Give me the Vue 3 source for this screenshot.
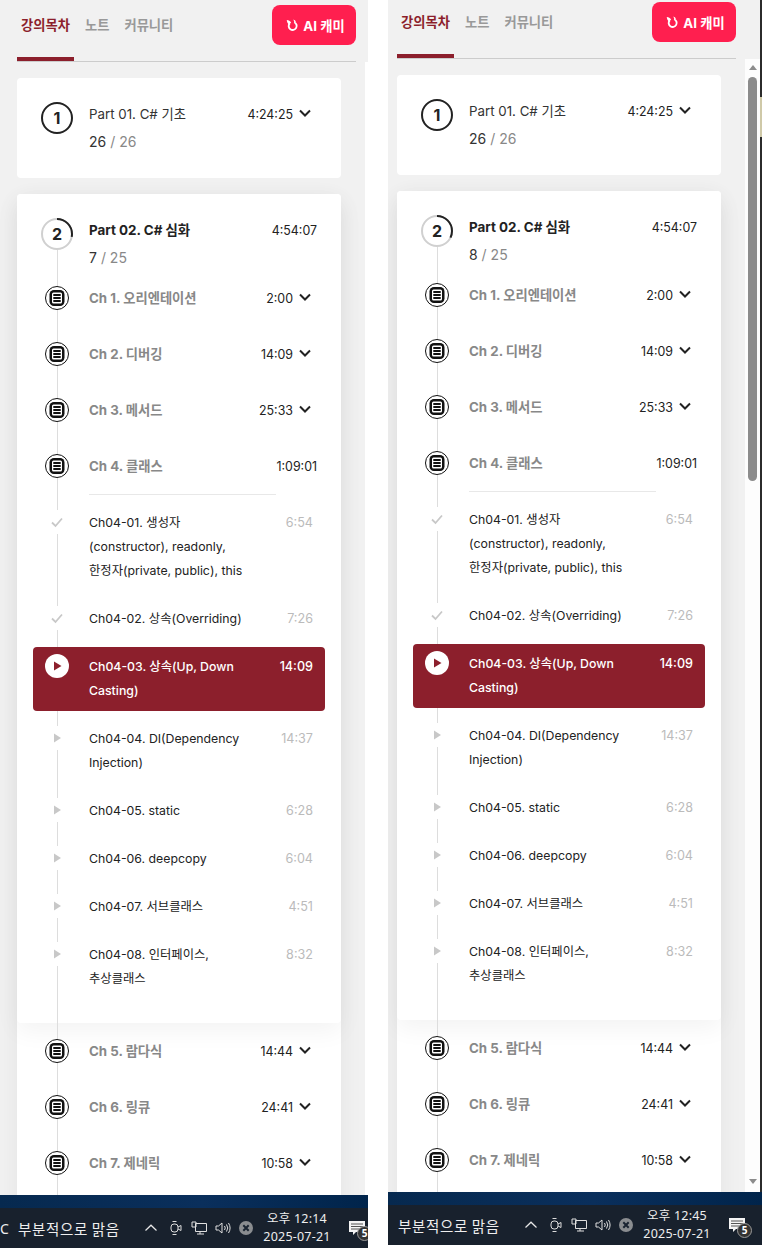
<script setup>
const topChapters = [
  { name: 'Ch 1. 오리엔테이션', time: '2:00', open: false },
  { name: 'Ch 2. 디버깅', time: '14:09', open: false },
  { name: 'Ch 3. 메서드', time: '25:33', open: false },
  { name: 'Ch 4. 클래스', time: '1:09:01', open: true },
]
const tailChapters = [
  { name: 'Ch 5. 람다식', time: '14:44' },
  { name: 'Ch 6. 링큐', time: '24:41' },
  { name: 'Ch 7. 제네릭', time: '10:58' },
]
const lectures = [
  { title: 'Ch04-01. 생성자 (constructor), readonly, 한정자(private, public), this', time: '6:54', state: 'done' },
  { title: 'Ch04-02. 상속(Overriding)', time: '7:26', state: 'done' },
  { title: 'Ch04-03. 상속(Up, Down Casting)', time: '14:09', state: 'now' },
  { title: 'Ch04-04. DI(Dependency Injection)', time: '14:37', state: 'todo' },
  { title: 'Ch04-05. static', time: '6:28', state: 'todo' },
  { title: 'Ch04-06. deepcopy', time: '6:04', state: 'todo' },
  { title: 'Ch04-07. 서브클래스', time: '4:51', state: 'todo' },
  { title: 'Ch04-08. 인터페이스, 추상클래스', time: '8:32', state: 'todo' },
]
const panels = [
  { id: 'left', done: 7, clock: '오후 12:14', weatherLead: 'C' },
  { id: 'right', done: 8, clock: '오후 12:45', weatherLead: '' },
]
const ringLength = 2 * Math.PI * 15
const ringDash = (done) => `${((done / 25) * ringLength).toFixed(1)} ${ringLength.toFixed(1)}`
</script>

<template>
  <div class="root">
    <section v-for="p in panels" :key="p.id" class="panel" :class="'panel-' + p.id">
      <div class="window">
        <div class="col">
          <header class="head">
            <nav class="tabs">
              <span class="tab active">강의목차</span>
              <span class="tab">노트</span>
              <span class="tab">커뮤니티</span>
            </nav>
            <button class="ai">
              <svg class="ai-icon" viewBox="0 0 14 14" width="13" height="13">
                <path d="M4 4.6a4.300 4.300 0 1 0 4.800-1.100" fill="none" stroke="#fff" stroke-width="2" />
                <path d="M.8 1c2 .2 3.700 1 4.700 2.700L3.300 6.200C1.800 4.800 1 3 .8 1zM7.800 .6c1.300.4 2.300 1 3 2L9 3.400C8.700 2.500 8.300 1.500 7.800 .6z" fill="#fff" />
              </svg>
              AI 캐미
            </button>
          </header>
          <div class="body">
            <div class="content">
              <article class="card part-one">
                <div class="ring full">1</div>
                <div class="part-text">
                  <div class="part-line">
                    <span class="part-title">Part 01. C# 기초</span>
                    <span class="time">4:24:25</span>
                    <svg class="chev" viewBox="0 0 24 12" width="24" height="12"><path d="M7 2.500 12 7.500l5-5" /></svg>
                  </div>
                  <div class="count">26 <i>/ 26</i></div>
                </div>
              </article>

              <article class="card part-two">
                <div class="open-box">
                  <span class="rail rail-top"></span>
                  <div class="part-head">
                    <div class="ring">
                      <svg class="ring-svg" viewBox="0 0 32 32" width="32" height="32">
                        <circle cx="16" cy="16" r="15" fill="#fff" stroke="#d0d0d0" stroke-width="2" />
                        <circle cx="16" cy="16" r="15" fill="none" stroke="#222" stroke-width="2" :stroke-dasharray="ringDash(p.done)" transform="rotate(-90 16 16)" />
                      </svg>
                      <span class="ring-num">2</span>
                    </div>
                    <div class="part-text">
                      <div class="part-line">
                        <span class="part-title strong">Part 02. C# 심화</span>
                        <span class="time">4:54:07</span>
                      </div>
                      <div class="count">{{ p.done }} <i>/ 25</i></div>
                    </div>
                  </div>

                  <div v-for="c in topChapters" :key="c.name" class="chapter">
                    <svg class="doc" viewBox="0 0 24 24" width="24" height="24">
                      <circle cx="12" cy="12" r="11.5" fill="#fff" stroke="#111" />
                      <rect x="4.500" y="4" width="15" height="16" rx="4.500" fill="#111" />
                      <rect x="7" y="6.500" width="10" height="11" rx="1.500" fill="#fff" />
                      <path d="M8.300 9h7.400M8.300 12h7.400M8.300 15h7.400" stroke="#111" stroke-width="1.800" />
                    </svg>
                    <span class="chapter-name">{{ c.name }}</span>
                    <span class="time">{{ c.time }}</span>
                    <svg v-if="!c.open" class="chev" viewBox="0 0 24 12" width="24" height="12"><path d="M7 2.500 12 7.500l5-5" /></svg>
                  </div>

                  <div class="divider"></div>

                  <div class="lectures">
                    <div v-for="l in lectures" :key="l.title" class="lecture" :class="{ now: l.state === 'now' }">
                      <span class="state" :class="'state-' + l.state">
                        <svg v-if="l.state === 'done'" viewBox="0 0 24 24" width="24" height="24"><path d="M7 12.500l3.500 3.500L17 8.500" fill="none" stroke="#c8c8c8" stroke-width="1.800" /></svg>
                        <svg v-else-if="l.state === 'todo'" viewBox="0 0 24 24" width="24" height="24"><path d="M9 7.500v9l7-4.500z" fill="#c8c8c8" /></svg>
                        <svg v-else viewBox="0 0 24 24" width="24" height="24"><circle cx="12" cy="12" r="12" fill="#fff" /><path d="M9 7.500v9l7.500-4.500z" fill="#8c1f2c" /></svg>
                      </span>
                      <span class="lecture-title">{{ l.title }}</span>
                      <span class="lecture-time">{{ l.time }}</span>
                    </div>
                  </div>
                </div>

                <div class="tail">
                  <span class="rail"></span>
                  <div v-for="c in tailChapters" :key="c.name" class="chapter">
                    <svg class="doc" viewBox="0 0 24 24" width="24" height="24">
                      <circle cx="12" cy="12" r="11.5" fill="#fff" stroke="#111" />
                      <rect x="4.500" y="4" width="15" height="16" rx="4.500" fill="#111" />
                      <rect x="7" y="6.500" width="10" height="11" rx="1.500" fill="#fff" />
                      <path d="M8.300 9h7.400M8.300 12h7.400M8.300 15h7.400" stroke="#111" stroke-width="1.800" />
                    </svg>
                    <span class="chapter-name">{{ c.name }}</span>
                    <span class="time">{{ c.time }}</span>
                    <svg class="chev" viewBox="0 0 24 12" width="24" height="12"><path d="M7 2.500 12 7.500l5-5" /></svg>
                  </div>
                </div>
              </article>
            </div>
            <div v-if="p.id === 'right'" class="scrollbar">
              <span class="arrow up"></span>
              <span class="thumb"></span>
              <span class="arrow down"></span>
            </div>
          </div>
        </div>
        <div v-if="p.id === 'right'" class="strip"></div>
      </div>

      <footer class="taskbar">
        <div class="task-blue"></div>
        <div class="task-dark">
          <span class="lead">{{ p.weatherLead }}</span>
          <span class="weather">부분적으로 맑음</span>
          <svg class="tray" viewBox="0 0 12 12" width="12" height="12"><path d="M.5 8.500 6 3.200l5.500 5.300" fill="none" stroke="#e8e8e8" stroke-width="1.200" /></svg>
          <svg class="tray tray-cam" viewBox="0 0 12 16" width="12" height="16">
            <rect x="1" y="4" width="7" height="8" rx="3" fill="none" stroke="#ddd" />
            <path d="M8 7l3-1.500v5L8 9M2.500 1.500h4M2.500 14.500h4" fill="none" stroke="#ddd" />
          </svg>
          <svg class="tray tray-net" viewBox="0 0 16 14" width="16" height="14">
            <path d="M4.500 2.500h11v8h-11zM1 1h4v5H1zM9 10.500v2.500M6 13h7" fill="#1a2431" stroke="#e0e0e0" />
          </svg>
          <svg class="tray tray-vol" viewBox="0 0 16 14" width="16" height="14">
            <path d="M1 5h2.500L7 2v10L3.500 9H1zM9.500 5q1.500 2 0 4M11.500 3.500q2.500 3.500 0 7M13.500 2q3.200 5 0 10" fill="none" stroke="#e0e0e0" />
          </svg>
          <svg class="tray tray-x" viewBox="0 0 14 14" width="14" height="14">
            <circle cx="7" cy="7" r="7" fill="#8a8d90" />
            <path d="M4.300 4.300l5.400 5.400M9.700 4.300l-5.400 5.400" stroke="#1a2431" stroke-width="2" />
          </svg>
          <div class="clock">
            <span>{{ p.clock }}</span>
            <span>2025-07-21</span>
          </div>
          <div class="notify">
            <svg viewBox="0 0 16 15" width="16" height="15">
              <path d="M0 0h16v11H7l-3 3v-3H0z" fill="#f4f4f4" />
              <path d="M2 3h12M2 5.500h12M2 8h8" stroke="#555" />
            </svg>
            <span class="badge">5</span>
          </div>
        </div>
      </footer>
    </section>
  </div>
</template>

<style>
html, body { margin: 0; background: #fff; }
</style>

<style scoped>
.root {
  display: flex;
  width: 772px;
  height: 1248px;
  overflow: hidden;
  background: #fff;
  font-family: Inter, "Noto Sans CJK KR", "Noto Sans", sans-serif;
  color: #222;
}
.panel { display: flex; flex-direction: column; overflow: hidden; }
.panel-left { width: 368px; height: 1248px; --inset: 17px; --lead: 18px; }
.panel-right { width: 374px; height: 1245px; margin-left: 20px; --inset: 9px; --lead: 10px; }
.window { flex: 1; min-height: 0; display: flex; overflow: hidden; }
.col { flex: 1; min-width: 0; display: flex; flex-direction: column; }
.strip {
  width: 2px;
  background: linear-gradient(#2b2b2b 0 97px, #cfc9a8 97px 137px, #2b2b2b 137px);
}

.head {
  display: flex;
  justify-content: space-between;
  align-items: flex-start;
  background: #f1f1f1;
  padding-left: var(--inset);
  flex: none;
  position: relative;
}
.panel-left .head { padding-top: 5px; padding-right: 12px; }
.panel-right .head { padding-top: 2px; padding-right: 24px; }
.head::after {
  content: "";
  position: absolute;
  left: var(--inset);
  bottom: 0;
  height: 1px;
  background: #ccc;
}
.panel-left .head::after { right: 12px; }
.panel-right .head::after { right: 24px; }
.tabs { display: flex; gap: 7px; padding-bottom: 1px; }
.tab {
  padding: 8px 4px 20px;
  line-height: 24px;
  border-bottom: 4px solid transparent;
  font-size: 13.3px;
  font-weight: 700;
  color: #999;
}
.tab.active { color: #8c1f2c; border-bottom-color: #8c1f2c; }
.ai {
  display: flex;
  align-items: center;
  justify-content: center;
  gap: 4px;
  width: 84px;
  height: 40px;
  border: 0;
  border-radius: 8px;
  background: #ff1f4f;
  color: #fff;
  font: 700 13.3px Inter, "Noto Sans CJK KR", sans-serif;
  padding: 0 0 0 3px;
}
.ai-icon { flex: none; }

.body { flex: 1; min-height: 0; display: flex; background: #fff; }
.content {
  flex: none;
  overflow: hidden;
  background: #f1f1f1;
  padding: 16px 0 0 var(--inset);
  box-sizing: border-box;
}
.panel-left .content { width: 365px; }
.panel-right .content { width: 357px; }

.card { width: 324px; background: #fff; border-radius: 4px; }
.part-one {
  display: flex;
  gap: 16px;
  padding: 24px;
  box-sizing: border-box;
  margin-bottom: 16px;
}
.part-two { box-shadow: 0 6px 24px rgba(0, 0, 0, .06); }
.open-box {
  position: relative;
  z-index: 0;
  background: #fff;
  border-radius: 4px;
  padding-bottom: 21px;
  box-shadow: 0 8px 24px rgba(0, 0, 0, .05);
}
.part-head {
  position: relative;
  display: flex;
  gap: 16px;
  height: 76px;
  padding: 24px 24px 0;
  box-sizing: border-box;
}
.ring {
  position: relative;
  flex: none;
  width: 32px;
  height: 32px;
  box-sizing: border-box;
  display: flex;
  align-items: center;
  justify-content: center;
  font-size: 16px;
  font-weight: 700;
  color: #222;
}
.ring.full { border: 2px solid #222; border-radius: 50%; }
.ring-svg { position: absolute; left: 0; top: 0; }
.ring-num { position: relative; }
.part-text { flex: 1; min-width: 0; }
.part-line { display: flex; align-items: center; height: 24px; }
.part-title { flex: 1; font-size: 13.3px; color: #333; margin-top: -2px; }
.part-title.strong { font-size: 13.4px; font-weight: 700; color: #222; }
.time { font-size: 12.4px; color: #222; flex: none; }
.chev { flex: none; }
.chev path { fill: none; stroke: #222; stroke-width: 2; }
.count { margin-top: 4px; height: 24px; line-height: 24px; font-size: 14px; color: #333; }
.count i { font-style: normal; color: #888; }

.chapter {
  position: relative;
  display: flex;
  align-items: center;
  height: 56px;
  padding: 0 24px 0 28px;
}
.doc { flex: none; margin-right: 20px; position: relative; }
.chapter-name { flex: 1; font-size: 13.3px; font-weight: 700; color: #888; margin-top: -2px; }

.rail {
  position: absolute;
  left: 40px;
  top: 0;
  bottom: 0;
  width: 1px;
  background: #ddd;
}
.rail-top { top: 56px; }
.tail { position: relative; z-index: 1; padding-bottom: 200px; }

.divider { position: relative; width: 187px; height: 1px; margin: 0 0 3px 72px; background: #e8e8e8; }
.lectures { position: relative; }
.lecture {
  display: flex;
  align-items: flex-start;
  margin: 0 16px;
  padding: 12px;
  border-radius: 4px;
}
.lecture.now {
  margin-top: 5px;
  margin-bottom: 3px;
  padding-top: 7px;
  padding-bottom: 9px;
  background: #8c1f2c;
  color: #fff;
  position: relative;
}
.state { flex: none; width: 24px; height: 24px; margin-right: 20px; background: #fff; }
.state svg { display: block; }
.state-now { background: none; }
.lecture-title {
  flex: none;
  width: 160px;
  margin: 1px 0 -1px;
  font-size: 12.3px;
  line-height: 24px;
  color: #222;
  word-break: keep-all;
}
.lecture-time { flex: 1; margin: 1px 0 -1px; text-align: right; font-size: 12.6px; line-height: 24px; color: #bbb; }
.now .lecture-title { color: #fff; font-weight: 500; }
.now .lecture-time { color: #fff; font-weight: 500; }

.scrollbar {
  flex: none;
  width: 15px;
  background: #fdfdfd;
  display: flex;
  flex-direction: column;
  align-items: center;
}
.arrow { width: 0; height: 0; border-left: 4.5px solid transparent; border-right: 4.5px solid transparent; }
.arrow.up { border-bottom: 5px solid #8c8c8c; margin-top: 6px; }
.arrow.down { border-top: 5px solid #8c8c8c; margin-top: auto; margin-bottom: 8px; }
.thumb { width: 9px; height: 404px; margin-top: 7px; border-radius: 5px; background: #8c8c8c; }

.taskbar { flex: none; height: 53px; display: flex; flex-direction: column; overflow: hidden; }
.task-blue { height: 13px; background: linear-gradient(90deg, #06294f, #0a2f5c 55%, #00244b); }
.task-dark {
  flex: 1;
  display: flex;
  align-items: center;
  background: #18212d;
  color: #eee;
}
.lead { flex: none; width: var(--lead); font-size: 14px; font-family: "Noto Sans", sans-serif; }
.weather { flex: none; width: 127px; font-size: 14.5px; letter-spacing: .65px; font-family: "Noto Sans CJK KR", sans-serif; }
.tray { flex: none; }
.tray-cam { margin-left: 13px; }
.tray-net { margin-left: 9px; }
.tray-vol { margin-left: 8px; }
.tray-x { margin-left: 8px; }
.clock {
  flex: none;
  width: 70px;
  margin-left: 9px;
  display: flex;
  flex-direction: column;
  align-items: center;
  font-size: 12.5px;
  letter-spacing: .2px;
  line-height: 18px;
  font-family: "Noto Sans", "Noto Sans CJK KR", sans-serif;
}
.notify { flex: none; position: relative; margin-left: 17px; width: 16px; height: 15px; }
.notify svg { display: block; }
.badge {
  position: absolute;
  left: 8px;
  top: 5px;
  width: 15px;
  height: 15px;
  box-sizing: border-box;
  border: 1px solid #999;
  border-radius: 50%;
  background: #333;
  color: #fff;
  font: 700 10px/13px "Noto Sans", sans-serif;
  text-align: center;
}
</style>
